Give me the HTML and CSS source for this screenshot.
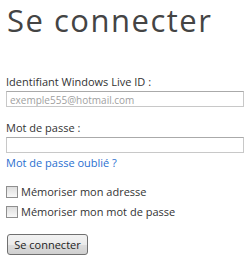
FILE: index.html
```html
<!DOCTYPE html>
<html lang="fr">
<head>
<meta charset="utf-8">
<link rel="stylesheet" href="styles.css">
</head>
<body>
<div class="page">
  <h1 class="title">Se connecter</h1>
  <form class="form">
    <label class="label" for="id">Identifiant Windows Live ID :</label>
    <input class="field" id="id" type="text" placeholder="exemple555@hotmail.com">
    <label class="label label-pw" for="pw">Mot de passe :</label>
    <input class="field" id="pw" type="password">
    <a class="forgot" href="#">Mot de passe oublié ?</a>
    <label class="check check-first"><span class="box"></span><span>Mémoriser mon adresse</span></label>
    <label class="check check-second"><span class="box"></span><span>Mémoriser mon mot de passe</span></label>
    <button class="btn" type="button">Se connecter</button>
  </form>
</div>
</body>
</html>
```
FILE: styles.css
```css
html, body {
  margin: 0;
  padding: 0;
  background: #fff;
}
.page {
  padding: 0 6px;
  font-family: "Open Sans", "DejaVu Sans", sans-serif;
  color: #333;
}
.title {
  margin: 0;
  padding-left: 1px;
  font-size: 31px;
  font-weight: 400;
  line-height: 40px;
  height: 38px;
  color: #444;
  letter-spacing: 1.5px;
  white-space: nowrap;
}
.form {
  display: flex;
  flex-direction: column;
  align-items: flex-start;
  padding-top: 37px;
  font-size: 11px;
}
.label {
  line-height: 14px;
  color: #333;
}
.label-pw {
  margin-top: 14px;
}
.field {
  box-sizing: border-box;
  width: 238px;
  height: 16px;
  margin: 2px 0 0;
  padding: 0 3px;
  border: 1px solid #c8c8c8;
  border-top-color: #aaa;
  border-radius: 0;
  font-family: inherit;
  font-size: 11px;
  color: #333;
  outline: none;
}
.field::placeholder {
  color: #a0a0a0;
  font-size: 10px;
}
.forgot {
  margin-top: 3px;
  line-height: 14px;
  color: #2a6fd0;
  text-decoration: none;
}
.check {
  display: flex;
  align-items: center;
  gap: 3px;
  line-height: 14px;
}
.check-first {
  margin-top: 15px;
}
.check-second {
  margin-top: 6px;
}
.box {
  box-sizing: border-box;
  width: 12px;
  height: 12px;
  border: 1px solid #8f8f8f;
  background: linear-gradient(#dedede, #f8f8f8);
}
.btn {
  margin: 15px 0 0 1px;
  width: 81px;
  height: 21px;
  padding: 0;
  border: 1px solid #707070;
  border-radius: 3px;
  background: linear-gradient(#f2f2f2 0%, #ebebeb 50%, #dddddd 51%, #cfcfcf 100%);
  font-family: inherit;
  font-size: 11px;
  color: #222;
}
```
